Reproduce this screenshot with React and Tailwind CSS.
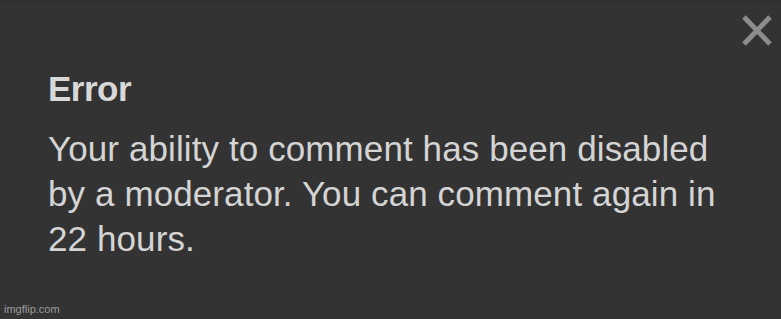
import React from "react";

const ErrorNotice = () => {
  return (
    <div className="relative w-[781px] h-[319px] overflow-hidden bg-[#333333] font-['Liberation_Sans',Arial,sans-serif]">
      {/* strip left over from the page behind the dialog */}
      <div className="h-[3px] w-full bg-[#2c2f2b]"></div>

      {/* close button */}
      <button className="absolute right-[9px] top-[15px] w-[30px] h-[31px] flex items-center justify-center">
        <svg width="30" height="31" viewBox="0 0 30 31">
          <path
            d="M2 2 L28 29 M28 2 L2 29"
            stroke="#8c8c8c"
            strokeWidth="5"
            strokeLinecap="butt"
            fill="none"
          />
        </svg>
      </button>

      <div className="pl-[48px] pt-[66px] w-[740px]">
        <h5 className="text-[35px] leading-[40px] font-bold text-[#d8d8d8] tracking-[-0.5px]">
          Error
        </h5>
        <p className="mt-[17px] text-[35px] leading-[45px] text-[#d4d4d4] tracking-[0.1px] w-[690px]">
          Your ability to comment has been disabled by a moderator. You can
          comment again in 22 hours.
        </p>
      </div>

      {/* watermark */}
      <span className="absolute left-[4px] bottom-[3px] text-[11px] leading-[13px] text-[#9c9c9c]">
        imgflip.com
      </span>
    </div>
  );
};

export default ErrorNotice;
